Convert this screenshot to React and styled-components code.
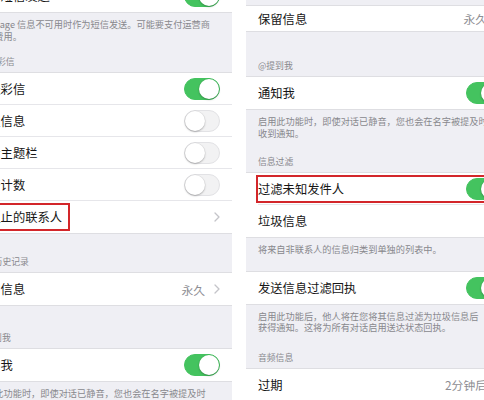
import React from "react";
import styled, { createGlobalStyle } from "styled-components";

const Global = createGlobalStyle`
  html, body { margin: 0; padding: 0; background: #ffffff; }
  body { font-family: "Noto Sans CJK SC", "Noto Sans", sans-serif; }
`;

const Page = styled.div`
  display: flex;
  gap: 14px;
  width: 484px;
  height: 400px;
  overflow: hidden;
  background: #ffffff;
`;

const Panel = styled.div`
  flex: 0 0 268px;
  width: 268px;
  margin-left: ${(p) => p.$shiftX || 0}px;
  background: #efeff4;
  height: 400px;
  overflow: hidden;
`;

const Scroll = styled.div`
  display: flex;
  flex-direction: column;
  margin-top: ${(p) => p.$shiftY || 0}px;
`;

const Section = styled.section`
  margin-top: ${(p) => p.$gap || 0}px;
  display: flex;
  flex-direction: column;
`;

const Header = styled.div`
  height: 16px;
  padding: 0 12px 5px;
  box-sizing: border-box;
  display: flex;
  align-items: flex-end;
  font-size: 8.8px;
  line-height: 11px;
  color: #88888d;
  white-space: nowrap;
`;

const Group = styled.div`
  background: #ffffff;
  border-top: 1px solid #dedee2;
  border-bottom: 1px solid #dedee2;
  display: flex;
  flex-direction: column;
`;

const Row = styled.div`
  position: relative;
  display: flex;
  padding-left: 12px;
  height: ${(p) => p.$h}px;
  box-sizing: border-box;
`;

const RowInner = styled.div`
  flex: 1;
  display: flex;
  align-items: center;
  padding-right: 12px;
  border-bottom: ${(p) => (p.$last ? "none" : "1px solid #e6e6ea")};
  min-width: 0;
`;

const Label = styled.span`
  flex: 1;
  font-size: 12.3px;
  color: #161616;
  white-space: nowrap;
`;

const Value = styled.span`
  font-size: 11.8px;
  color: #8e8e93;
  margin-right: 9px;
  white-space: nowrap;
`;

const Toggle = styled.span`
  position: relative;
  width: 36px;
  height: 22px;
  box-sizing: border-box;
  border-radius: 11px;
  background: ${(p) => (p.$on ? "#44c35f" : "#f2f2f3")};
  border: 1px solid ${(p) => (p.$on ? "#44c35f" : "#e2e2e5")};
  flex: 0 0 auto;
  &::after {
    content: "";
    position: absolute;
    top: 0px;
    ${(p) => (p.$on ? "right: 0px;" : "left: 0px;")}
    width: 20px;
    height: 20px;
    border-radius: 50%;
    background: #ffffff;
    box-shadow: 0 1px 2px rgba(0, 0, 0, 0.25), 0 0 0 0.5px rgba(0, 0, 0, 0.06);
  }
`;

const Mark = styled.span`
  position: absolute;
  top: 2px;
  bottom: 2px;
  left: 10px;
  ${(p) => (p.$width ? `width: ${p.$width}px;` : "right: 4px;")}
  border: 2px solid #d3262a;
  box-sizing: border-box;
  pointer-events: none;
`;

const Footer = styled.div`
  padding: 6px 12px 0;
  font-size: 9.2px;
  line-height: 11.5px;
  color: #88888d;
  white-space: nowrap;
`;

const Chevron = () => (
  <svg width="6" height="10" viewBox="0 0 6 10" style={{ flex: "0 0 auto" }}>
    <path d="M1 1 L5 5 L1 9" fill="none" stroke="#c4c4c9" strokeWidth="1.3" strokeLinecap="round" strokeLinejoin="round" />
  </svg>
);

const leftData = [
  {
    gap: 0,
    rows: [{ label: "作为短信发送", toggle: true }],
    footer: ["iMessage 信息不可用时作为短信发送。可能要支付运营商", "短信费用。"],
  },
  {
    gap: 14,
    header: "短信/彩信",
    rows: [
      { label: "发送彩信", toggle: true },
      { label: "群组信息", toggle: false },
      { label: "显示主题栏", toggle: false },
      { label: "字符计数", toggle: false },
      { label: "已阻止的联系人", chevron: true, mark: 96 },
    ],
  },
  {
    gap: 22,
    header: "信息历史记录",
    rows: [{ label: "保留信息", value: "永久", chevron: true }],
  },
  {
    gap: 26,
    header: "@提到我",
    rows: [{ label: "通知我", toggle: true }],
    footer: ["启用此功能时，即使对话已静音，您也会在名字被提及时", "收到通知。"],
  },
];

const rightData = [
  {
    gap: 5,
    rows: [{ label: "保留信息", value: "永久", chevron: true, h: 25 }],
  },
  {
    gap: 28,
    header: "@提到我",
    rows: [{ label: "通知我", toggle: true }],
    footer: ["启用此功能时，即使对话已静音，您也会在名字被提及时", "收到通知。"],
  },
  {
    gap: 17,
    header: "信息过滤",
    rows: [
      { label: "过滤未知发件人", toggle: true, mark: "full" },
      { label: "垃圾信息", chevron: true },
    ],
    footer: ["将来自非联系人的信息归类到单独的列表中。"],
  },
  {
    gap: 15,
    rows: [{ label: "发送信息过滤回执", toggle: true }],
    footer: ["启用此功能后，他人将在您将其信息过滤为垃圾信息后", "获得通知。这将为所有对话启用送达状态回执。"],
  },
  {
    gap: 18,
    header: "音频信息",
    rows: [{ label: "过期", value: "2分钟后", chevron: true }],
  },
];

function SettingsPanel({ data, shiftX, shiftY, rowH }) {
  return (
    <Panel $shiftX={shiftX}>
      <Scroll $shiftY={shiftY}>
        {data.map((s, i) => (
          <Section key={i} $gap={s.gap}>
            {s.header && <Header>{s.header}</Header>}
            <Group>
              {s.rows.map((r, j) => (
                <Row key={j} $h={r.h || rowH}>
                  <RowInner $last={j === s.rows.length - 1}>
                    <Label>{r.label}</Label>
                    {r.value && <Value>{r.value}</Value>}
                    {r.toggle !== undefined && <Toggle $on={r.toggle} />}
                    {r.chevron && <Chevron />}
                  </RowInner>
                  {r.mark && <Mark $width={r.mark === "full" ? 0 : r.mark} />}
                </Row>
              ))}
            </Group>
            {s.footer && (
              <Footer>
                {s.footer.map((line, k) => (
                  <div key={k}>{line}</div>
                ))}
              </Footer>
            )}
          </Section>
        ))}
      </Scroll>
    </Panel>
  );
}

export default function App() {
  return (
    <>
      <Global />
      <Page>
        <SettingsPanel data={leftData} shiftX={-36} shiftY={-21} rowH={32} />
        <SettingsPanel data={rightData} shiftX={0} shiftY={0} rowH={32} />
      </Page>
    </>
  );
}
